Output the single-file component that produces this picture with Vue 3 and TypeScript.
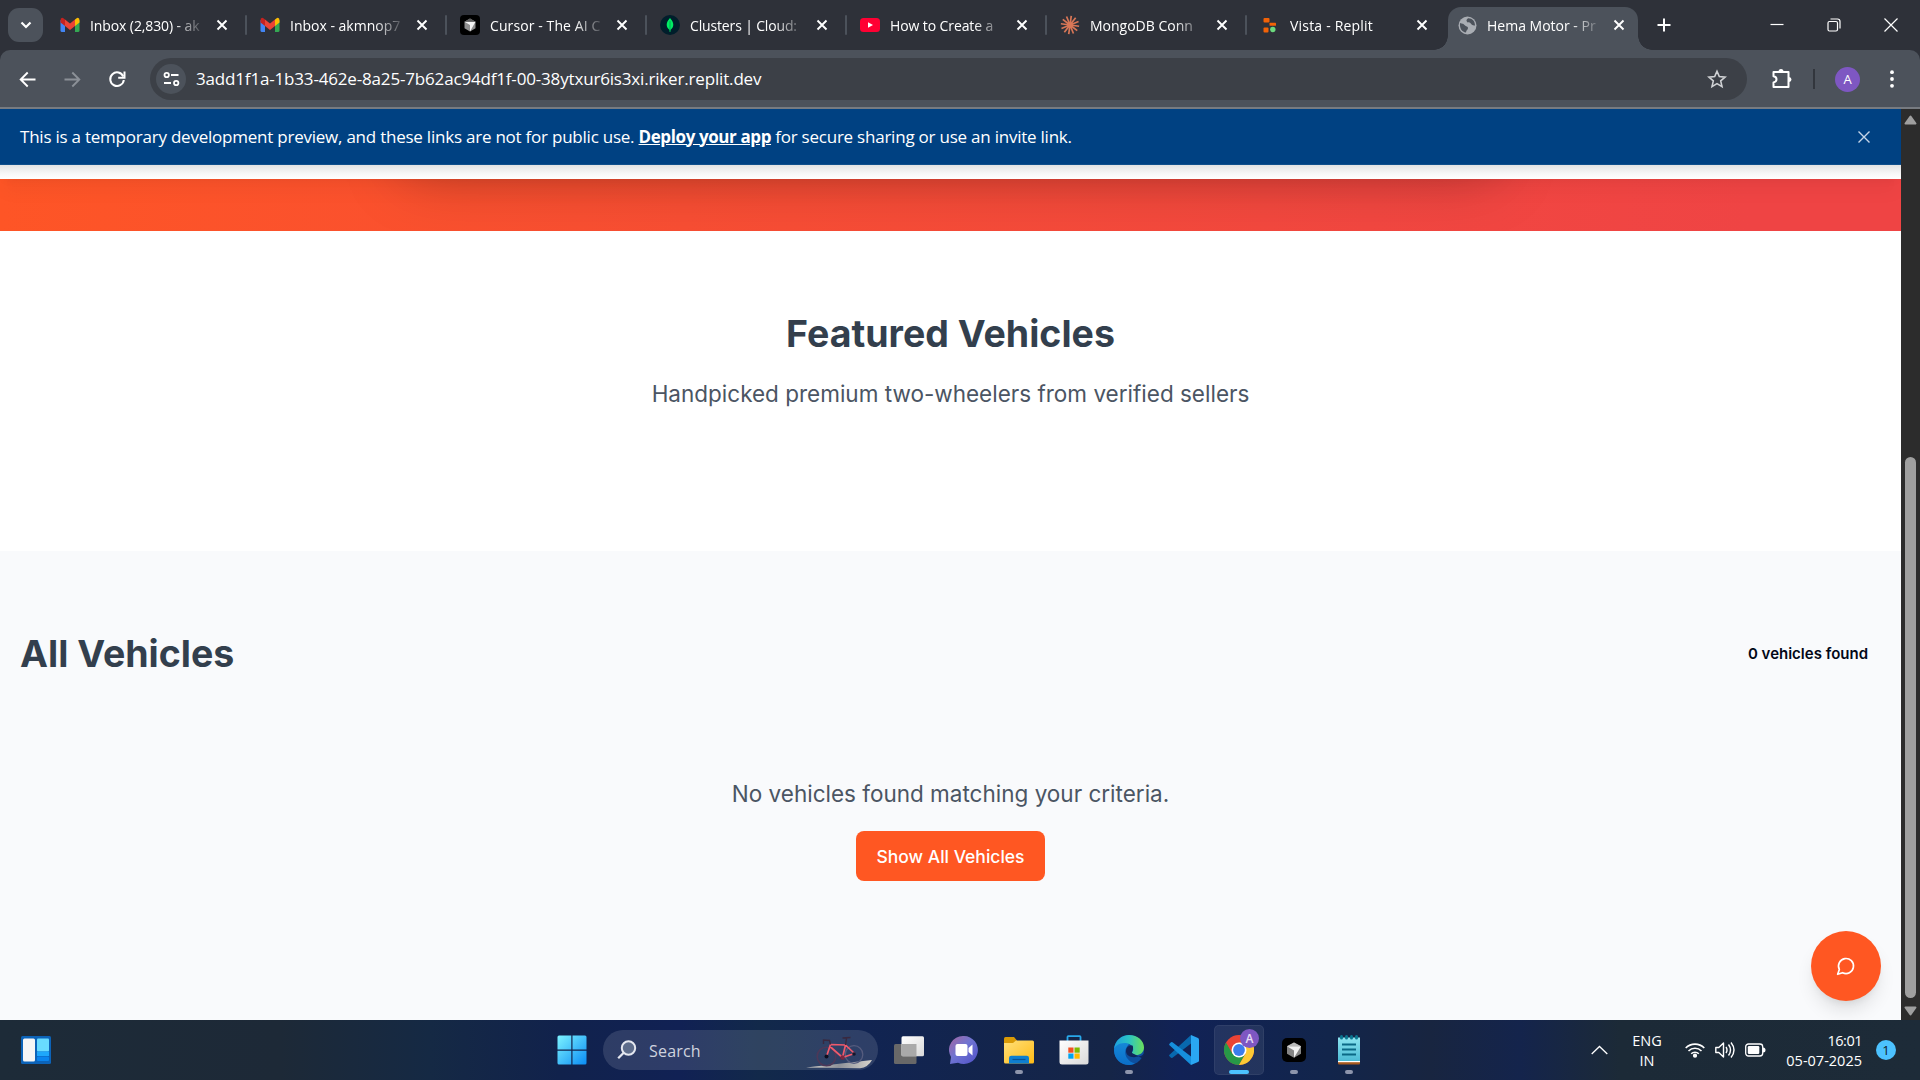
<script setup lang="ts">
interface Tab {
  icon: string
  title: string
  spacing: number
}

const tabs: Tab[] = [
  { icon: 'gmail', title: 'Inbox (2,830) - ak', spacing: -0.1 },
  { icon: 'gmail', title: 'Inbox - akmnop7', spacing: 0 },
  { icon: 'cursor', title: 'Cursor - The AI C', spacing: 0.1 },
  { icon: 'mongo', title: 'Clusters | Cloud:', spacing: -0.15 },
  { icon: 'youtube', title: 'How to Create a', spacing: -0.1 },
  { icon: 'claude', title: 'MongoDB Conn', spacing: 0 },
  { icon: 'replit', title: 'Vista - Replit', spacing: 0.2 },
]

const rays = Array.from({ length: 12 }, (_, i) => i * 30 + 8)
</script>

<template>
  <div class="screen">
    <svg class="defs" width="0" height="0" aria-hidden="true">
      <defs>
        <linearGradient id="win" x1="0" y1="0" x2="1" y2="1"><stop offset="0" stop-color="#7df3ff" /><stop offset="1" stop-color="#0a8cf5" /></linearGradient>
        <linearGradient id="chat" x1="0" y1="0" x2="1" y2="1"><stop offset="0" stop-color="#a5669f" /><stop offset=".45" stop-color="#6f74d2" /><stop offset="1" stop-color="#4f50c8" /></linearGradient>
        <linearGradient id="folder" x1="0" y1="0" x2="1" y2="1"><stop offset="0" stop-color="#ffe07a" /><stop offset="1" stop-color="#ffbb16" /></linearGradient>
        <linearGradient id="edgeTop" x1="0" y1="0" x2="1" y2="0"><stop offset="0" stop-color="#1d9fdf" /><stop offset=".5" stop-color="#2bc4c4" /><stop offset="1" stop-color="#6be05a" /></linearGradient>
        <linearGradient id="edgeLow" x1="0" y1="0" x2="0" y2="1"><stop offset="0" stop-color="#1689d8" /><stop offset="1" stop-color="#0b6fc9" /></linearGradient>
        <linearGradient id="note" x1="0" y1="0" x2="0" y2="1"><stop offset="0" stop-color="#8be3ef" /><stop offset="1" stop-color="#49b9d4" /></linearGradient>
        <linearGradient id="pane" x1="0" y1="0" x2="1" y2="1"><stop offset="0" stop-color="#fff" /><stop offset="1" stop-color="#d9d9d9" /></linearGradient>
        <linearGradient id="ground" x1="0" y1="0" x2="1" y2="0"><stop offset="0" stop-color="#ddd8cf" /><stop offset=".5" stop-color="#8d9098" /><stop offset="1" stop-color="#d8d4cc" /></linearGradient>
      </defs>
    </svg>

    <header class="tabstrip">
      <button class="tab-search"><svg width="12" height="8" viewBox="0 0 12 8"><path d="M1.500 1.500 6 6l4.500-4.500" fill="none" stroke="#fff" stroke-width="2.200" /></svg></button>
      <div v-for="(tab, i) in tabs" :key="i" class="tab">
        <span class="favicon">
          <svg v-if="tab.icon === 'gmail'" width="20" height="20" viewBox="0 0 20 20">
            <path d="M0.500 5v10.500q0 1.500 1.500 1.500h3V8z" fill="#4285f4" />
            <path d="M19.500 5v10.500q0 1.500-1.500 1.500h-3V8z" fill="#34a853" />
            <path d="M15 4.500 17 3q2.500-.8 2.500 2.500v2L15 11z" fill="#fbbc04" />
            <path d="M5 4.500 3 3Q.500 2.200.500 5.500v2L5 11z" fill="#c5221f" />
            <path d="M5 4.500l5 4 5-4V11l-5 4-5-4z" fill="#ea4335" />
          </svg>
          <svg v-else-if="tab.icon === 'cursor'" width="20" height="20" viewBox="0 0 20 20">
            <rect width="20" height="20" rx="4" fill="#000" />
            <path d="M10 3.500 15.500 6.700v6.600L10 16.500l-5.500-3.200V6.700z" fill="#8f8f8f" />
            <path d="M4.500 6.700h11L10 16.500V10z" fill="#f4f4f4" /><path d="M10 3.500l5.500 3.200h-11z" fill="#5d5d5d" />
          </svg>
          <svg v-else-if="tab.icon === 'mongo'" width="20" height="20" viewBox="0 0 20 20">
            <circle cx="10" cy="10" r="10" fill="#001e2b" />
            <path d="M10 3c2 2.200 3.300 4.300 3.300 6.800 0 2.300-1.200 3.900-2.800 5.100L10.300 17h-.600l-.200-2.100C7.900 13.700 6.700 12 6.700 9.800 6.700 7.300 8 5.200 10 3z" fill="#00ed64" />
            <path d="M10 6v10" stroke="#00814a" stroke-width=".6" />
          </svg>
          <svg v-else-if="tab.icon === 'youtube'" width="20" height="20" viewBox="0 0 20 20">
            <rect y="3" width="20" height="14" rx="3.500" fill="#ff0033" /><path d="M8 7.200v5.600l5-2.800z" fill="#fff" />
          </svg>
          <svg v-else-if="tab.icon === 'claude'" width="20" height="20" viewBox="0 0 20 20">
            <path v-for="r in rays" :key="r" d="M10 10V.8" stroke="#d97757" stroke-width="1.700" :transform="`rotate(${r} 10 10)`" />
            <circle cx="10" cy="10" r="3" fill="#d97757" />
          </svg>
          <svg v-else width="20" height="20" viewBox="0 0 20 20">
            <rect x="3.500" y="3" width="6" height="4.500" rx="1" fill="#f26207" />
            <rect x="9.500" y="7.800" width="6.500" height="3" rx=".6" fill="#f26207" />
            <rect x="3.500" y="12.500" width="5" height="5" rx="1" fill="#f26207" /><circle cx="12.800" cy="14.500" r="2.700" fill="#6cd97e" />
          </svg>
        </span>
        <span class="tab-title" :style="{ letterSpacing: tab.spacing + 'px' }">{{ tab.title }}</span>
        <svg class="tab-close" width="12" height="12" viewBox="0 0 12 12"><path d="M1.500 1.500l9 9m0-9l-9 9" stroke="#fff" stroke-width="1.900" /></svg>
      </div>
      <div class="tab active">
        <span class="favicon">
          <svg width="19" height="19" viewBox="0 0 19 19">
            <circle cx="9.500" cy="9.500" r="9" fill="#a9adb3" />
            <path d="M2 7c2 1 3 0 4.500 2s3.500 1 3.500 3-2 2-2 4.500C4 16 1.500 12.500 2 7zM10 2.300c-1.500 1.500-2 2-1 3.500s3 0 4 2 3 1.500 4 1.700C17 5 14 2 10 2.300z" fill="#4c525b" />
          </svg>
        </span>
        <span class="tab-title">Hema Motor - Pr</span>
        <svg class="tab-close" width="12" height="12" viewBox="0 0 12 12"><path d="M1.500 1.500l9 9m0-9l-9 9" stroke="#fff" stroke-width="1.900" /></svg>
      </div>
      <svg class="new-tab" width="14" height="14" viewBox="0 0 14 14"><path d="M7 .5v13M.5 7h13" stroke="#fff" stroke-width="2" /></svg>
      <div class="window-controls">
        <svg width="14" height="14" viewBox="0 0 14 14"><path d="M.5 6.500h13" stroke="#fff" stroke-width="1.200" /></svg>
        <svg width="14" height="14" viewBox="0 0 14 14"><rect x="1" y="3.500" width="9.500" height="9.500" rx="1.500" fill="none" stroke="#fff" stroke-width="1.200" /><path d="M3.500 1h7q2.500 0 2.500 2.500v7" fill="none" stroke="#fff" stroke-width="1.200" /></svg>
        <svg width="14" height="14" viewBox="0 0 14 14"><path d="M.5 .5l13 13m0-13l-13 13" stroke="#fff" stroke-width="1.200" /></svg>
      </div>
    </header>

    <div class="toolbar-wrap">
      <div class="toolbar">
        <svg class="nav-icon" width="17" height="17" viewBox="0 0 17 17"><path d="M16.500 8.500H2m6.700-7L1.700 8.500l7 7" fill="none" stroke="#fff" stroke-width="1.900" /></svg>
        <svg class="nav-icon" width="17" height="17" viewBox="0 0 17 17"><path d="M.5 8.500H15M8.300 1.500l7 7-7 7" fill="none" stroke="#8b9097" stroke-width="1.900" /></svg>
        <svg class="nav-icon reload" width="18" height="18" viewBox="0 0 18 18"><path d="M15.300 6.500A6.800 6.800 0 1 0 15.800 10" fill="none" stroke="#fff" stroke-width="2" /><path d="M16.500 1.500v6.300h-6.300" fill="none" stroke="#fff" stroke-width="2" /></svg>
        <div class="omnibox">
          <span class="site-info">
            <svg width="17" height="16" viewBox="0 0 17 16" fill="none" stroke="#fff" stroke-width="1.800"><circle cx="3.700" cy="4" r="2.200" /><path d="M8 4h7.500M1 12h7" /><circle cx="13.200" cy="12" r="2.200" /></svg>
          </span>
          <span class="url">3add1f1a-1b33-462e-8a25-7b62ac94df1f-00-38ytxur6is3xi.riker.replit.dev</span>
          <svg class="star" width="20" height="20" viewBox="0 0 20 20"><path d="M10 2.200l2.300 5.400 5.800.5-4.400 3.800 1.300 5.700-5-3-5 3 1.300-5.700-4.400-3.800 5.800-.5z" fill="none" stroke="#d0d2d5" stroke-width="1.600" /></svg>
        </div>
        <svg class="puzzle" width="22" height="22" viewBox="0 0 22 22"><path d="M2.500 4h15v15h-15v-4.600c4-.600 4-5.600 0-6.200z" fill="none" stroke="#fff" stroke-width="2" stroke-linejoin="round" /><path d="M7.500 3.500a2.500 2.500 0 0 1 5 0zM18 9a2.500 2.500 0 0 1 0 5z" fill="#fff" /></svg>
        <i class="divider"></i>
        <span class="avatar">A</span>
        <svg class="dots" width="4" height="18" viewBox="0 0 4 18" fill="#fff"><circle cx="2" cy="2.200" r="1.900" /><circle cx="2" cy="9" r="1.900" /><circle cx="2" cy="15.800" r="1.900" /></svg>
      </div>
    </div>

    <div class="viewport">
      <div class="page">
        <div class="banner">
          <p>This is a temporary development preview, and these links are not for public use. <a>Deploy your app</a> for secure sharing or use an invite link.</p>
          <svg width="12" height="12" viewBox="0 0 12 12"><path d="M.5 .5l11 11m0-11l-11 11" stroke="#c6d6e8" stroke-width="1.400" /></svg>
        </div>
        <div class="nav-end"></div>
        <div class="hero"></div>
        <section class="featured">
          <h2>Featured Vehicles</h2>
          <p>Handpicked premium two-wheelers from verified sellers</p>
        </section>
        <section class="all">
          <div class="all-head">
            <h2>All Vehicles</h2>
            <span class="count">0 vehicles found</span>
          </div>
          <div class="empty">
            <p>No vehicles found matching your criteria.</p>
            <button class="show-all">Show All Vehicles</button>
          </div>
        </section>
        <button class="chat-fab">
          <svg width="20" height="20" viewBox="0 0 24 24" fill="none" stroke="#fff" stroke-width="2" stroke-linecap="round" stroke-linejoin="round"><path d="M7.900 20A9 9 0 1 0 4 16.100L2 22Z" /></svg>
        </button>
      </div>
      <div class="scrollbar">
        <svg width="13" height="10" viewBox="0 0 13 10"><path d="M6.500 1.500l5 7h-10z" fill="#9f9f9f" stroke="#9f9f9f" stroke-width="2" stroke-linejoin="round" /></svg>
        <div class="thumb"></div>
        <svg width="13" height="10" viewBox="0 0 13 10"><path d="M6.500 8.500l5-7h-10z" fill="#9f9f9f" stroke="#9f9f9f" stroke-width="2" stroke-linejoin="round" /></svg>
      </div>
    </div>

    <footer class="taskbar">
      <svg class="widgets" width="30" height="28" viewBox="0 0 30 28">
        <rect width="30" height="28" rx="1.500" fill="#0c63b8" /><rect x="2" y="2.500" width="12" height="23" rx="1.500" fill="#f5f5f5" />
        <rect x="16" y="2.500" width="12" height="13" rx="1" fill="#69dbff" /><rect x="16" y="15.500" width="12" height="4.500" fill="#1ea7fb" /><rect x="16" y="20.500" width="12" height="4.500" rx="1" fill="#0a84ee" />
      </svg>
      <div class="apps">
        <div class="app start"><svg width="30" height="30" viewBox="0 0 30 30" fill="url(#win)"><path d="M2 .5h12.300v14H.5V2Q.5.5 2 .5zM15.500.5H28q1.500 0 1.500 1.500v12.500h-14zM.5 15.700h13.800v13.800H2Q.5 29.500.5 28zM15.500 15.700h14V28q0 1.500-1.500 1.500H15.500z" /></svg></div>
        <div class="search">
          <svg width="20" height="20" viewBox="0 0 20 20" fill="none" stroke="#e4e7ef" stroke-width="2"><circle cx="11.500" cy="8" r="6.700" fill="#5d6c8b" /><path d="M6.700 12.800 1.200 18.300" stroke-width="2.300" /></svg>
          <span>Search</span>
          <svg class="bike" width="68" height="34" viewBox="0 0 68 34" fill="none">
            <path d="M0 32.500 66 25q-4 7.500-12 8.200z" fill="url(#ground)" />
            <circle cx="20.500" cy="21.500" r="9.300" stroke="#4d3858" stroke-width="1.600" /><circle cx="48" cy="19.500" r="8.800" stroke="#565c7e" stroke-width="1.300" />
            <path d="M20.500 21.500l4-12 15 .500-3 12.500-12.500-11M39.500 10l9 8.500-12 4" stroke="#ee5a6c" stroke-width="1.700" stroke-linejoin="round" />
            <path d="M24.500 9.500l-1-4-6-.500v4M39.500 10l1-6.500m-4-.500 8-.500M34 22.500l3 2" stroke="#39283f" stroke-width="1.400" />
            <circle cx="20.500" cy="21.500" r="2" fill="#0b0f20" /><circle cx="36.500" cy="22.500" r="2.200" fill="#7a2742" /><circle cx="48" cy="19" r="1.800" fill="#14172c" />
          </svg>
        </div>
        <div class="app"><svg width="30" height="30" viewBox="0 0 30 30"><rect x="0" y="9" width="22.500" height="20" rx="1.500" fill="#686868" /><rect x="7.500" y="1.200" width="22.500" height="20" rx="1.500" fill="url(#pane)" /><path d="M7.500 9h15v12.200H9q-1.500 0-1.500-1.500z" fill="#a9a9a9" /></svg></div>
        <div class="app"><svg width="30" height="30" viewBox="0 0 30 30"><path d="M15 1a14 14 0 1 1-6 26.700L1 29l1-7A14 14 0 0 1 15 1z" fill="url(#chat)" /><rect x="6.500" y="9" width="12" height="12" rx="2" fill="#fff" /><path d="M19.500 13l4-3.500v11L19.500 17z" fill="#fff" /></svg></div>
        <div class="app"><svg width="30" height="30" viewBox="0 0 30 30"><path d="M0 3.500Q0 2 1.500 2H10l3 3.500V9H0z" fill="#d99a06" /><path d="M0 8h9l3-2.500h16.500Q30 5.500 30 7v20q0 1.500-1.500 1.500h-27Q0 28.500 0 27z" fill="url(#folder)" /><path d="M5 28.500V23q0-2.300 2.300-2.300h15.400Q25 20.700 25 23v5.500z" fill="#0f7fd0" /><path d="M8.500 24.500h13" stroke="#0a5398" stroke-width="1.200" /></svg><i class="dot"></i></div>
        <div class="app"><svg width="30" height="30" viewBox="0 0 30 30"><path d="M8.500 8V2q0-.8.8-.8h11.400q.8 0 .8.8v6" fill="none" stroke="#28a8ea" stroke-width="1.800" /><path d="M.5 5.500h29V27q0 2.500-2.500 2.500H3Q.5 29.500.5 27z" fill="url(#pane)" /><path d="M9.300 12.500h5.200v5.200H9.300z" fill="#f25022" /><path d="M15.500 12.500h5.200v5.200h-5.200z" fill="#7fba00" /><path d="M9.300 18.500h5.200v5.200H9.300z" fill="#00a4ef" /><path d="M15.500 18.500h5.200v5.200h-5.200z" fill="#ffb900" /></svg></div>
        <div class="app"><svg width="30" height="30" viewBox="0 0 30 30">
          <circle cx="15" cy="15" r="15" fill="#0d4f9e" />
          <path d="M0 15C1 5 9 5 15 9c-4 4-5 9-2 14 2 3 5 5 8 5.500C12 33 0 27 0 15z" fill="url(#edgeLow)" />
          <path d="M0 14C1 5 8 0 15 0c9 0 15 6 15 12.500 0 5-4 7.500-7.500 7.500-3 0-4.500-1-4.500-2.200 0-1 1.200-1.500 1.200-3.800C19 10.500 15 8 10.500 8 5 8 1.200 11 0 14z" fill="url(#edgeTop)" />
          <path d="M18 18c0 1.500 2 3.500 5.500 3.500 2.500 0 4.500-1 5.800-2.300.7-.500 1.200 0 .7 1-.7 1.300-1.200 2.100-2 3.100" fill="#11265a" />
          <path d="M18.500 10.500c1.500 3-.5 5-.5 7 0 2.500 3 4 6 4-6 2-12-.5-12-5.500 0-3 2-5 4-5.500z" fill="#11265a" />
        </svg><i class="dot"></i></div>
        <div class="app"><svg width="30" height="30" viewBox="0 0 30 30"><path d="M22 0l7 3q1 .5 1 1.500v21q0 1-1 1.500l-7 3z" fill="#2aa7f2" /><path d="M22 0v8.500L3.500 22.700Q2.500 23.300 1.700 22.500L.5 21.300q-.8-.8 0-1.500z" fill="#0868ae" /><path d="M22 30v-8.500L3.500 7.300Q2.500 6.700 1.700 7.500L.5 8.700q-.8.800 0 1.500z" fill="#168fdc" /></svg></div>
        <div class="app current">
          <svg width="30" height="30" viewBox="0 0 30 30">
            <circle cx="15" cy="15" r="15" fill="#ea4335" />
            <path d="M2 7.500A15 15 0 0 0 15 30l6.500-11.300L8.500 18.700z" fill="#279847" />
            <path d="M15 30A15 15 0 0 0 28 7.500H15l6.500 11.200z" fill="#fcc934" />
            <circle cx="15" cy="15" r="7.500" fill="#fff" /><circle cx="15" cy="15" r="5.900" fill="#3b7ded" />
          </svg>
          <span class="profile">A</span><i class="dot"></i>
        </div>
        <div class="app"><svg width="24" height="24" viewBox="0 0 24 24"><rect width="24" height="24" rx="5" fill="#000" /><path d="M12 4.500l7 3.700v7.600l-7 4-7-4V8.200z" fill="#858585" /><path d="M5 8.200h14L12 19.800V12.500z" fill="#f2f2f2" /><path d="M12 4.500l7 3.700H5z" fill="#bbb" /></svg><i class="dot"></i></div>
        <div class="app"><svg width="30" height="30" viewBox="0 0 30 30"><rect x="4" y="24" width="22" height="5.500" rx="1" fill="#a85a1f" /><path d="M4 2.500h22V27H4z" fill="url(#note)" /><path d="M4 26h22v1.200H4z" fill="#fff" /><path d="M8 9.500h14M8 14.500h14M8 19.500h14" stroke="#0b6885" stroke-width="1.800" /><g fill="#0b7590"><rect x="6" y="0" width="3" height="4.500" rx="1.500" /><rect x="11" y="0" width="3" height="4.500" rx="1.500" /><rect x="16" y="0" width="3" height="4.500" rx="1.500" /><rect x="21" y="0" width="3" height="4.500" rx="1.500" /></g></svg><i class="dot"></i></div>
      </div>
      <div class="tray">
        <svg class="up" width="17" height="10" viewBox="0 0 17 10"><path d="M.7 9l7.800-7.500L16.300 9" fill="none" stroke="#fff" stroke-width="1.300" /></svg>
        <div class="lang"><span>ENG</span><span>IN</span></div>
        <svg class="wifi" width="20" height="16" viewBox="0 0 20 16" fill="none" stroke="#fff" stroke-width="1.600"><path d="M.7 6a13 13 0 0 1 18.600 0M3.500 9a9.200 9.200 0 0 1 13 0M6.200 11.800a5.400 5.400 0 0 1 7.600 0" /><circle cx="10" cy="13.700" r="1.300" fill="#fff" /></svg>
        <svg class="vol" width="21" height="18" viewBox="0 0 21 18" fill="none" stroke="#fff" stroke-width="1.400"><path d="M.8 6.500h3L8.500 2v14l-4.700-4.500h-3z" stroke-linejoin="round" /><path d="M11 6q2 3 0 6M13.500 3.500q4 5.500 0 11M16 1.500q6 7.500 0 15" /></svg>
        <svg class="battery" width="21" height="14" viewBox="0 0 21 14"><rect x=".7" y="1" width="17" height="12" rx="2.800" fill="none" stroke="#fff" stroke-width="1.300" /><rect x="2.800" y="3" width="11.500" height="8" rx="1.200" fill="#fff" /><path d="M18 4.500q2.500 0 2.500 2.500T18 9.500z" fill="#fff" /></svg>
        <div class="clock"><span class="time">16:01</span><span class="date">05-07-2025</span></div>
        <span class="notice">1</span>
      </div>
    </footer>
  </div>
</template>

<style>
html,
body {
  margin: 0;
  overflow: hidden;
}
</style>

<style scoped>
.screen {
  width: 1920px;
  height: 1080px;
  display: flex;
  flex-direction: column;
  overflow: hidden;
  background: #2e3139;
  font-family: 'Open Sans', 'Noto Sans', sans-serif;
  color: #fff;
}
.screen *,
.screen *::before,
.screen *::after { box-sizing: border-box; }
.defs { position: absolute; }
svg { display: block; flex: none; }
button { border: 0; padding: 0; font: inherit; color: inherit; }
h2, p { margin: 0; }

.tabstrip { height: 50px; flex: none; display: flex; align-items: center; padding-left: 8px; }
.tab-search { width: 35px; height: 34px; border-radius: 11px; background: #4c525b; display: grid; place-items: center; margin-right: 3px; }
.tab { width: 200px; height: 50px; display: flex; align-items: center; padding-left: 14px; flex: none; position: relative; }
.tab:not(.active)::after { content: ''; position: absolute; right: -1px; top: 15px; width: 2px; height: 20px; background: #4c525b; border-radius: 1px; }
.tab:nth-child(8)::after { display: none; }
.favicon { width: 20px; margin-right: 10px; flex: none; }
.tab-title { width: 120px; padding-top: 1px; font-size: 14px; line-height: 24px; white-space: nowrap; flex: none; -webkit-mask-image: linear-gradient(90deg, #000 84px, transparent 116px); mask-image: linear-gradient(90deg, #000 84px, transparent 116px); }
.tab-close { margin-left: 6px; }
.tab.active { width: 190px; height: 43px; margin: 7px 0 0 2px; padding: 0 0 7px 10px; background: #4c525b; border-radius: 13px 13px 0 0; }
.active .favicon { width: 19px; }
.active::before, .active::after { content: ''; position: absolute; bottom: 0; width: 14px; height: 14px; }
.active::before { left: -14px; background: radial-gradient(circle at 0 0, transparent 13.500px, #4c525b 14px); }
.active::after { right: -14px; background: radial-gradient(circle at 100% 0, transparent 13.500px, #4c525b 14px); }
.new-tab { margin-left: 19px; }
.window-controls { margin-left: auto; margin-right: 22px; display: flex; gap: 43px; }

.toolbar-wrap { height: 59px; flex: none; background: #2e3139; }
.toolbar { height: 59px; background: #4c525b; border-bottom: 2px solid #777b81; border-radius: 10px 10px 0 0; display: flex; align-items: center; padding: 1px 0 0 19px; }
.nav-icon { margin-right: 28px; }
.nav-icon.reload { margin: 0 29px 0 -1px; }
.omnibox { width: 1597px; height: 42px; border-radius: 21px; background: #3c4047; display: flex; align-items: center; padding: 0 20px 0 6px; margin-left: -5px; }
.site-info { width: 30px; height: 30px; border-radius: 50%; background: #4c525b; display: grid; place-items: center; margin-right: 10px; }
.url { font-size: 17px; line-height: 28px; letter-spacing: -0.17px; white-space: nowrap; }
.star { margin-left: auto; }
.puzzle { margin-left: 24px; }
.divider { width: 2px; height: 20px; background: #32363d; margin-left: 20px; }
.avatar { width: 25px; height: 25px; margin-left: 20px; border-radius: 50%; background: #7e57c2; font-size: 13px; line-height: 25px; text-align: center; }
.dots { margin-left: 30px; }

.viewport { flex: 1; display: flex; min-height: 0; }
.page { width: 1901px; background: #fff; position: relative; overflow: hidden; }
.banner { height: 56px; background: #004182; border-bottom: 1px solid #11508c; display: flex; align-items: center; justify-content: space-between; padding: 0 31px 0 20px; font-size: 17px; line-height: 24px; }
.banner p { white-space: nowrap; letter-spacing: -0.23px; }
.banner a { font-weight: 700; text-decoration: underline; letter-spacing: -0.4px; }
.nav-end { height: 14px; background: linear-gradient(#e3e3e3, #f7f7f7 60%, #fff); position: relative; box-shadow: 0 12px 19px -4px rgba(0, 0, 0, 0.1), 0 5px 8px -5px rgba(0, 0, 0, 0.1); z-index: 1; }
.hero { height: 52px; background: linear-gradient(to right, #fe5526, #f24740 72%, #ef4444 92%); position: relative; overflow: hidden; }
.hero::before { content: ''; position: absolute; left: 390px; top: -130px; width: 1120px; height: 110px; box-shadow: 0 31px 62px -15px rgba(0, 0, 0, 0.25); }
.featured { height: 320px; padding-top: 80px; text-align: center; font-family: Inter, sans-serif; }
h2 { font-family: Inter, sans-serif; font-size: 37.500px; line-height: 45px; font-weight: 700; color: #333f4d; }
.featured p, .empty p { font-size: 22.500px; line-height: 35px; color: #4b5563; font-family: Inter, sans-serif; }
.featured p { margin-top: 20px; }
.all { height: 469px; background: #f9fafc; padding: 80px 20px 0; font-family: Inter, sans-serif; }
.all-head { display: flex; justify-content: space-between; align-items: center; height: 45px; }
.count { font-size: 15px; font-weight: 600; color: #020817; margin-right: 13px; }
.empty { display: flex; flex-direction: column; align-items: center; margin-top: 100px; }
.show-all { margin-top: 20px; width: 189px; height: 50px; border-radius: 8px; background: #ff5722; color: #fff; font-size: 17.500px; font-weight: 500; }
.chat-fab { position: absolute; right: 20px; bottom: 19px; width: 70px; height: 70px; border-radius: 50%; background: #ff5722; display: grid; place-items: center; box-shadow: 0 12px 19px -4px rgba(0, 0, 0, 0.12), 0 5px 8px -5px rgba(0, 0, 0, 0.1); }
.scrollbar { width: 19px; background: #2c2c2c; display: flex; flex-direction: column; align-items: center; padding: 6px 0 4px; }
.thumb { width: 11px; height: 541px; margin: 332px 0 8px; border-radius: 5.500px; background: #9f9f9f; }

.taskbar { height: 60px; flex: none; display: flex; align-items: center; background: linear-gradient(90deg, #1d2b38 0, #1d2937 280px, #152944 430px, #11224c 560px, #112154 680px, #12294a 760px, #112452 860px, #152547 1110px, #112256 1180px, #12254b 1330px, #182540 1430px, #14244c 1520px, #1c2a37 1620px, #1d2b38 1920px); }
.widgets { margin-left: 21px; }
.apps { display: flex; align-items: center; margin-left: 494.500px; }
.app { width: 55px; height: 60px; display: grid; place-items: center; position: relative; }
.start { padding-right: 2px; }
.dot { position: absolute; left: 23.500px; bottom: 6px; width: 8px; height: 4px; border-radius: 2px; background: #8d95ac; }
.current::before { content: ''; position: absolute; left: 2.500px; top: 5px; width: 50px; height: 50px; border-radius: 5px; background: rgba(255, 255, 255, 0.08); border: 1px solid rgba(255, 255, 255, 0.06); }
.current svg { position: relative; }
.current .dot { left: 17.500px; width: 20px; background: #4cc2ff; }
.profile { position: absolute; left: 29px; top: 9px; width: 19px; height: 19px; border-radius: 50%; background: #7e57c2; color: #e6dcf5; font-size: 12px; font-weight: 600; line-height: 19px; text-align: center; }
.search { width: 275px; height: 40px; margin: 0 3px 0 2.500px; border-radius: 20px; background: rgba(255, 255, 255, 0.125); display: flex; align-items: center; padding-left: 14px; }
.search span { margin-left: 12px; padding-top: 1px; font-size: 16px; color: #ced3df; letter-spacing: 0.2px; }
.bike { margin: 4px 4px 0 auto; }
.tray { margin-left: auto; display: flex; align-items: center; padding-right: 24px; height: 60px; font-size: 14.500px; line-height: 20px; }
.lang, .clock { display: flex; flex-direction: column; padding-top: 1px; }
.lang { width: 30px; margin: 0 23px 0 24px; align-items: center; }
.vol { margin-left: 10px; }
.battery { margin-left: 9px; }
.clock { align-items: flex-end; width: 96px; }
.time { letter-spacing: -0.5px; }
.notice { width: 20px; height: 20px; border-radius: 50%; background: #4cc2ff; color: #10202c; font-size: 13px; line-height: 20px; text-align: center; margin-left: 14px; }
</style>
